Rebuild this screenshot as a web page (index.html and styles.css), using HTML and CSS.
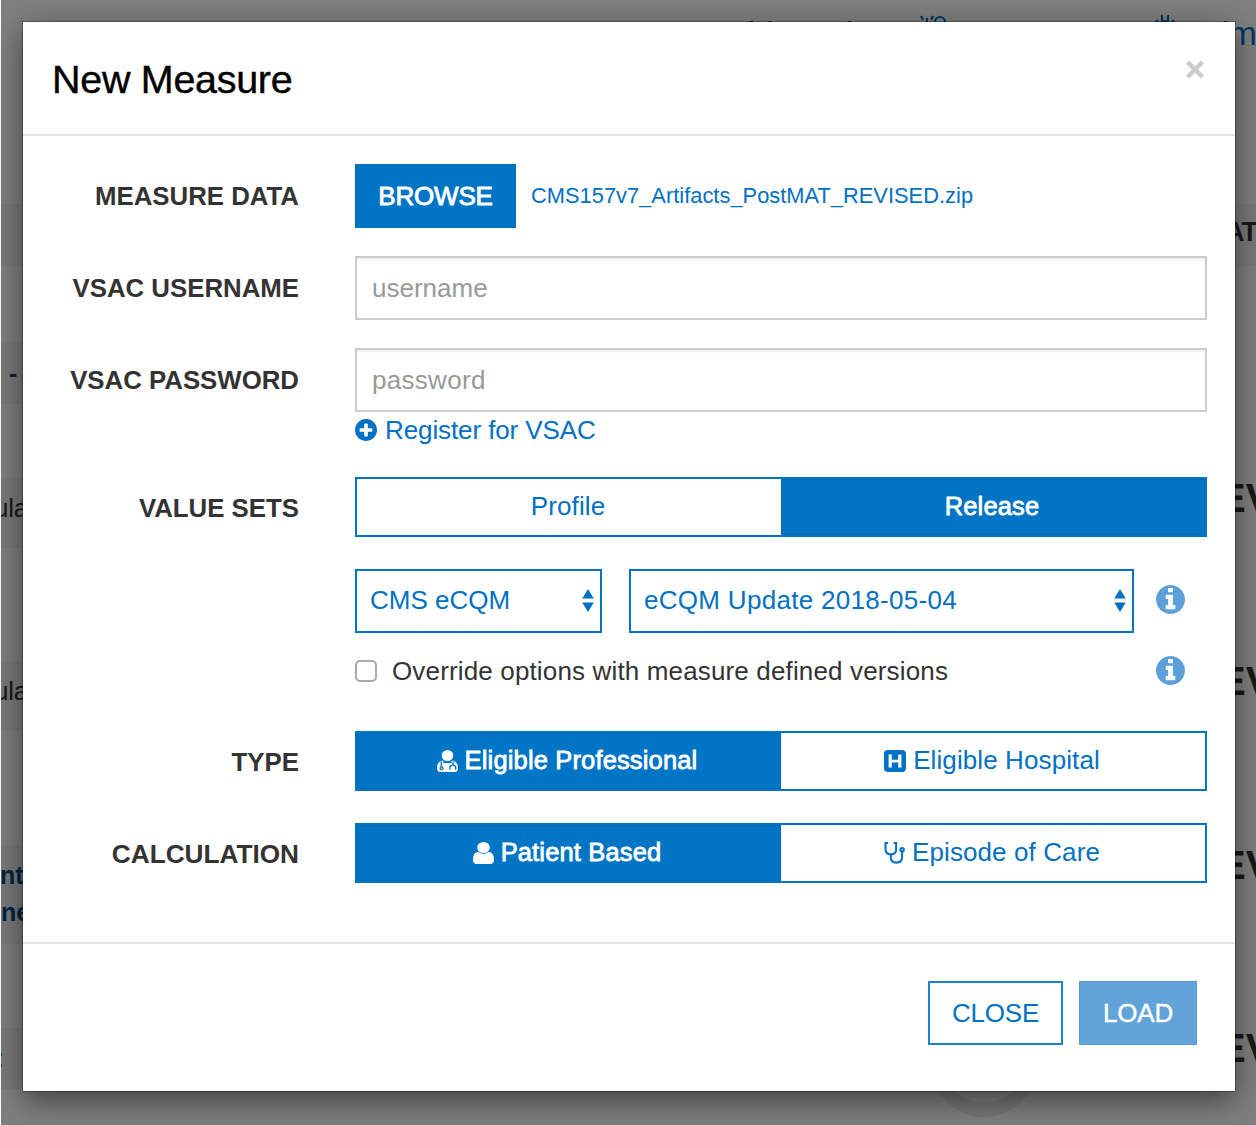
FILE: index.html
```html
<!DOCTYPE html>
<html lang="en">
<head>
<meta charset="utf-8">
<title>New Measure</title>
<link rel="stylesheet" href="styles.css">
</head>
<body>
<svg class="sprite" aria-hidden="true">
  <symbol id="plus" viewBox="128 128 1536 1536"><path d="M1344 960v-128q0-26-19-45t-45-19h-256v-256q0-26-19-45t-45-19h-128q-26 0-45 19t-19 45v256h-256q-26 0-45 19t-19 45v128q0 26 19 45t45 19h256v256q0 26 19 45t45 19h128q26 0 45-19t19-45v-256h256q26 0 45-19t19-45zm320-64q0 209-103 385.5t-279.5 279.5-385.5 103-385.5-103-279.5-279.5-103-385.5 103-385.5 279.5-279.5 385.5-103 385.5 103 279.5 279.5 103 385.5z"/></symbol>
  <symbol id="info" viewBox="128 128 1536 1536"><path d="M1152 1376v-160q0-14-9-23t-23-9h-96v-512q0-14-9-23t-23-9h-320q-14 0-23 9t-9 23v160q0 14 9 23t23 9h96v320h-96q-14 0-23 9t-9 23v160q0 14 9 23t23 9h448q14 0 23-9t9-23zm-128-896v-160q0-14-9-23t-23-9h-192q-14 0-23 9t-9 23v160q0 14 9 23t23 9h192q14 0 23-9t9-23zm640 416q0 209-103 385.5t-279.5 279.5-385.5 103-385.5-103-279.5-279.5-103-385.5 103-385.5 279.5-279.5 385.5-103 385.5 103 279.5 279.5 103 385.5z"/></symbol>
  <symbol id="user" viewBox="256 128 1280 1536" preserveAspectRatio="none"><path d="M1536 1399q0 109-62.5 187t-150.5 78h-854q-88 0-150.5-78t-62.5-187q0-85 8.5-160.5t31.5-152 58.5-131 94-89 134.500-34.500q131 128 313 128t313-128q76 0 134.500 34.500t94 89 58.500 131 31.500 152 8.500 160.500zm-256-887q0 159-112.500 271.500t-271.500 112.500-271.500-112.500-112.500-271.500 112.500-271.500 271.500-112.500 271.500 112.500 112.500 271.500z"/></symbol>
  <symbol id="doctor" viewBox="0 0 22 24" preserveAspectRatio="none">
    <circle cx="11" cy="6" r="6"/>
    <path d="M5.500 11.500Q11 15.500 16.500 11.500Q22 12.500 22 20Q22 24 18.500 24H3.500Q0 24 0 20Q0 12.500 5.500 11.500z"/>
    <path class="cut" d="M4.500 12.500v6M16.800 12.500v4M13.500 21.500v-2.500q0-2.500 3-2.500t3 2.500v2.500M6.500 13.500h9"/>
    <circle class="cut" cx="4.800" cy="20" r="1.500"/>
  </symbol>
  <symbol id="hospital" viewBox="0 0 24 24"><path fill-rule="evenodd" d="M4.500 0h15Q24 0 24 4.500v15Q24 24 19.500 24h-15Q0 24 0 19.500v-15Q0 0 4.500 0zM5 5v14h3.500v-5.500h7V19H19V5h-3.500v5.500h-7V5z"/></symbol>
  <symbol id="scope" viewBox="0 0 22 24"><path class="line" d="M4 1.200H1.200V8Q1.200 13.500 7 13.500T12.800 8V1.200H10M7 13.500V17Q7 22.500 13 22.500T19.300 17V10"/><circle class="line" cx="19.300" cy="8.500" r="1.900"/></symbol>
  <symbol id="gears" viewBox="0 0 30 28"><path class="line" d="M9 3v5M3 1l2 4M15 1l-2 4M1 14h4M9 20v5"/><circle class="line" cx="9" cy="14" r="5"/><circle class="line" cx="22" cy="7" r="5"/></symbol>
  <symbol id="gear" viewBox="0 0 22 28"><path class="line" d="M8 0v6M14 0v6M2 5l4 4M20 5l-4 4M11 20v6"/><circle class="line" cx="11" cy="12" r="6"/></symbol>
</svg>

<div class="page" aria-hidden="true">
  <div class="nav">
    <span class="current">Dashboard</span>
    <span class="account"><svg class="gears"><use href="#gears"/></svg>Account</span>
    <span class="admin"><svg class="gear"><use href="#gear"/></svg>Adm</span>
  </div>
  <div class="band head"><b>AT</b></div>
  <div class="band title"><b class="cell link dash">-</b></div>
  <div class="band pop"><span class="cell left">ula</span><b class="new">EV</b></div>
  <div class="band pop second"><span class="cell left">ula</span><b class="new">EV</b></div>
  <div class="band tall"><b class="cell link">nt<br>ne</b><b class="new">EV</b></div>
  <div class="band last"><span class="cell link colon">:</span><b class="new">EV</b></div>
  <div class="ring"></div>
</div>
<div class="shade"></div>

<div class="modal" role="dialog">
  <header class="modal-head">
    <h1>New Measure</h1>
    <button class="dismiss" aria-label="Close"><svg viewBox="0 0 20 22"><path d="M2.500 4l15 15M17.500 4l-15 15"/></svg></button>
  </header>
  <main class="form">
    <div class="row file">
      <label>MEASURE DATA</label>
      <div class="field"><button class="btn solid browse">BROWSE</button><span class="filename">CMS157v7_Artifacts_PostMAT_REVISED.zip</span></div>
    </div>
    <div class="row user">
      <label for="u">VSAC USERNAME</label>
      <input id="u" placeholder="username">
    </div>
    <div class="row pass">
      <label for="p">VSAC PASSWORD</label>
      <input id="p" placeholder="password">
    </div>
    <div class="register"><svg><use href="#plus"/></svg><span>Register for VSAC</span></div>
    <div class="row sets">
      <label>VALUE SETS</label>
      <div class="group"><button>Profile</button><button class="active">Release</button></div>
    </div>
    <div class="selects">
      <div class="select program"><span>CMS eCQM</span><svg viewBox="0 0 12 24"><path d="M0 10L6 0l6 10zM0 14h12L6 24z"/></svg></div>
      <div class="select release"><span>eCQM Update 2018-05-04</span><svg viewBox="0 0 12 24"><path d="M0 10L6 0l6 10zM0 14h12L6 24z"/></svg></div>
      <svg class="info"><use href="#info"/></svg>
    </div>
    <div class="override">
      <span class="box"></span><span class="text">Override options with measure defined versions</span>
      <svg class="info"><use href="#info"/></svg>
    </div>
    <div class="row type">
      <label>TYPE</label>
      <div class="group"><button class="active"><svg class="slim"><use href="#doctor"/></svg>Eligible Professional</button><button><svg class="wide"><use href="#hospital"/></svg>Eligible Hospital</button></div>
    </div>
    <div class="row calc">
      <label>CALCULATION</label>
      <div class="group"><button class="active"><svg class="slim"><use href="#user"/></svg>Patient Based</button><button><svg class="slim"><use href="#scope"/></svg>Episode of Care</button></div>
    </div>
  </main>
  <footer class="modal-foot">
    <button class="btn outline">CLOSE</button>
    <button class="btn load">LOAD</button>
  </footer>
</div>
</body>
</html>
```
FILE: styles.css
```css
* { box-sizing: border-box; }
html, body { height: 100%; }
body {
  margin: 0;
  height: 1125px;
  overflow: hidden;
  position: relative;
  background: #fff;
  color: #333;
  font-family: "Liberation Sans", Arial, sans-serif;
  font-size: 26px;
}
button, input { font: inherit; margin: 0; border-radius: 0; }
svg { display: block; fill: currentColor; flex: none; }
.sprite { position: absolute; width: 0; height: 0; }
.line { fill: none; stroke: currentColor; stroke-width: 2.2; }
.cut { fill: none; stroke: #0074c5; stroke-width: 1.4; }

.page {
  position: absolute;
  inset: 0 0 0 1px;
  overflow: hidden;
  background: #fff;
  color: #333;
}
.shade { position: absolute; inset: 0 0 0 1px; background: rgba(0, 0, 0, .5); }
.nav {
  display: flex;
  align-items: flex-start;
  height: 204px;
  padding: 15px 0 0 686px;
  color: #0071bc;
  font-size: 34px;
  line-height: 36px;
  white-space: nowrap;
}
.nav .current { width: 238px; color: #222; }
.nav .account { width: 243px; }
.nav .account, .nav .admin { display: flex; gap: 14px; }
.gears { width: 30px; height: 28px; }
.gear { width: 22px; height: 28px; }
.nav .admin { gap: 12px; letter-spacing: -.8px; }
.band {
  display: flex;
  background: linear-gradient(#f2f2f2, #f2f2f2) no-repeat 0 0 / 600px 100%;
  white-space: nowrap;
}
.head { height: 62px; background: #f2f2f2; padding: 13px 0 0 1224px; font-size: 27px; letter-spacing: -1px; }
.title { height: 62px; margin-top: 76px; }
.pop { height: 70px; margin-top: 74px; }
.second { margin-top: 113px; }
.tall { height: 99px; margin-top: 114px; }
.last { height: 61px; margin-top: 84px; }
.cell { flex: 0 0 1218px; }
.link { color: #004b87; font-size: 25px; line-height: 37px; padding-top: 12px; text-indent: -1px; }
.dash { padding-left: 9px; padding-top: 13px; }
.colon { text-indent: -4px; }
.left { text-indent: -7px; padding-top: 15px; letter-spacing: -.3px; }
.new { font-size: 40px; line-height: 40px; }
.ring {
  width: 106px;
  height: 106px;
  margin: -78px 0 0 930px;
  border: 14px solid #ebebeb;
  border-radius: 50%;
}

.modal {
  position: relative;
  display: flex;
  flex-direction: column;
  width: 1212px;
  height: 1069px;
  margin-left: 23px;
  top: 22px;
  background: #fff;
  box-shadow: 0 0 0 1px rgba(0, 0, 0, .28), 0 9px 28px rgba(0, 0, 0, .5);
}
.modal-head {
  display: flex;
  justify-content: space-between;
  height: 114px;
  padding: 35px 30px 0 29px;
  border-bottom: 2px solid #e5e5e5;
}
h1 { margin: 0; color: #000; font-size: 39.500px; line-height: 44px; font-weight: 400; letter-spacing: -.3px; -webkit-text-stroke: .4px #000; }
.dismiss { width: 20px; height: 22px; margin-top: 1px; padding: 0; border: 0; background: none; color: #ccc; }
.dismiss svg { width: 20px; height: 22px; fill: none; stroke: currentColor; stroke-width: 4.500; }

.form { flex: 1; padding: 28px 28px 0 0; }
.row { display: grid; grid-template-columns: 276px 852px; column-gap: 56px; align-items: center; }
label { text-align: right; font-weight: 700; font-size: 25.800px; white-space: nowrap; }
.sets label, .type label, .calc label { padding-top: 2px; }
.calc label { font-size: 26.200px; }
.field { display: flex; align-items: center; gap: 15px; }
.btn { height: 64px; border: 2px solid #0071bc; padding: 0; letter-spacing: -.2px; }
.solid { background: #0074c5; color: #fff; -webkit-text-stroke: .9px #fff; }
.browse { width: 161px; }
.filename { color: #0071c4; font-size: 21.800px; letter-spacing: .04px; }
input {
  width: 852px;
  height: 64px;
  padding: 0 15px;
  border: 2px solid #ccc;
  background: #fff;
  outline: none;
  box-shadow: inset 0 2px 2px rgba(0, 0, 0, .06);
}
input::placeholder { color: #999; opacity: 1; }
.user, .pass { margin-top: 28px; }
.pass input { letter-spacing: .3px; }
.register { display: flex; align-items: center; gap: 8px; height: 36px; margin-left: 332px; color: #0071c4; }
.register svg { width: 22px; height: 22px; }
.register span { letter-spacing: -.1px; }
.sets { margin-top: 29px; }
.group { display: grid; grid-template-columns: 424px 424px; height: 60px; border: 2px solid #0074c5; }
.group button {
  display: flex;
  align-items: center;
  justify-content: center;
  gap: 7px;
  padding: 0 2px 1px 0;
  border: 0;
  background: #fff;
  color: #0071c4;
  letter-spacing: .1px;
  white-space: nowrap;
}
.group .active {
  background: #0074c5;
  color: #fff;
  font-size: 25.500px;
  letter-spacing: .15px;
  -webkit-text-stroke: .8px #fff;
  box-shadow: inset 0 0 0 1px #0069b2;
}
.type .active, .calc .active { padding-right: 4px; }
.group svg { height: 22px; }
.slim { width: 21px; }
.wide { width: 22px; }
.selects { display: flex; align-items: center; margin: 32px 0 0 332px; }
.select {
  display: flex;
  align-items: center;
  justify-content: space-between;
  height: 64px;
  padding: 0 6px 1px 13px;
  border: 2px solid #0074c5;
  color: #0071c4;
  white-space: nowrap;
}
.select svg { width: 12px; height: 23px; }
.program { width: 247px; }
.release { width: 505px; margin-left: 27px; letter-spacing: .3px; }
.info { width: 29px; height: 29px; margin: 0 22px 3px auto; color: #5ba0d8; }
.override { display: flex; align-items: center; height: 38px; margin: 19px 0 0 332px; }
.override .info { margin-bottom: 2px; }
.box { width: 22px; height: 22px; border: 2px solid #aaa; border-radius: 5px; }
.text { margin-left: 15px; letter-spacing: .15px; }
.type { margin-top: 41px; }
.calc { margin-top: 32px; }
.modal-foot {
  display: flex;
  justify-content: flex-end;
  gap: 16px;
  height: 149px;
  padding: 37px 38px 0 0;
  border-top: 2px solid #e5e5e5;
}
.outline { width: 135px; background: #fff; color: #0071c4; border-color: #1b82cd; }
.load { width: 118px; background: #62a4d9; color: #fff; border: 1px solid #5b9acb; -webkit-text-stroke: .4px #fff; }
```
